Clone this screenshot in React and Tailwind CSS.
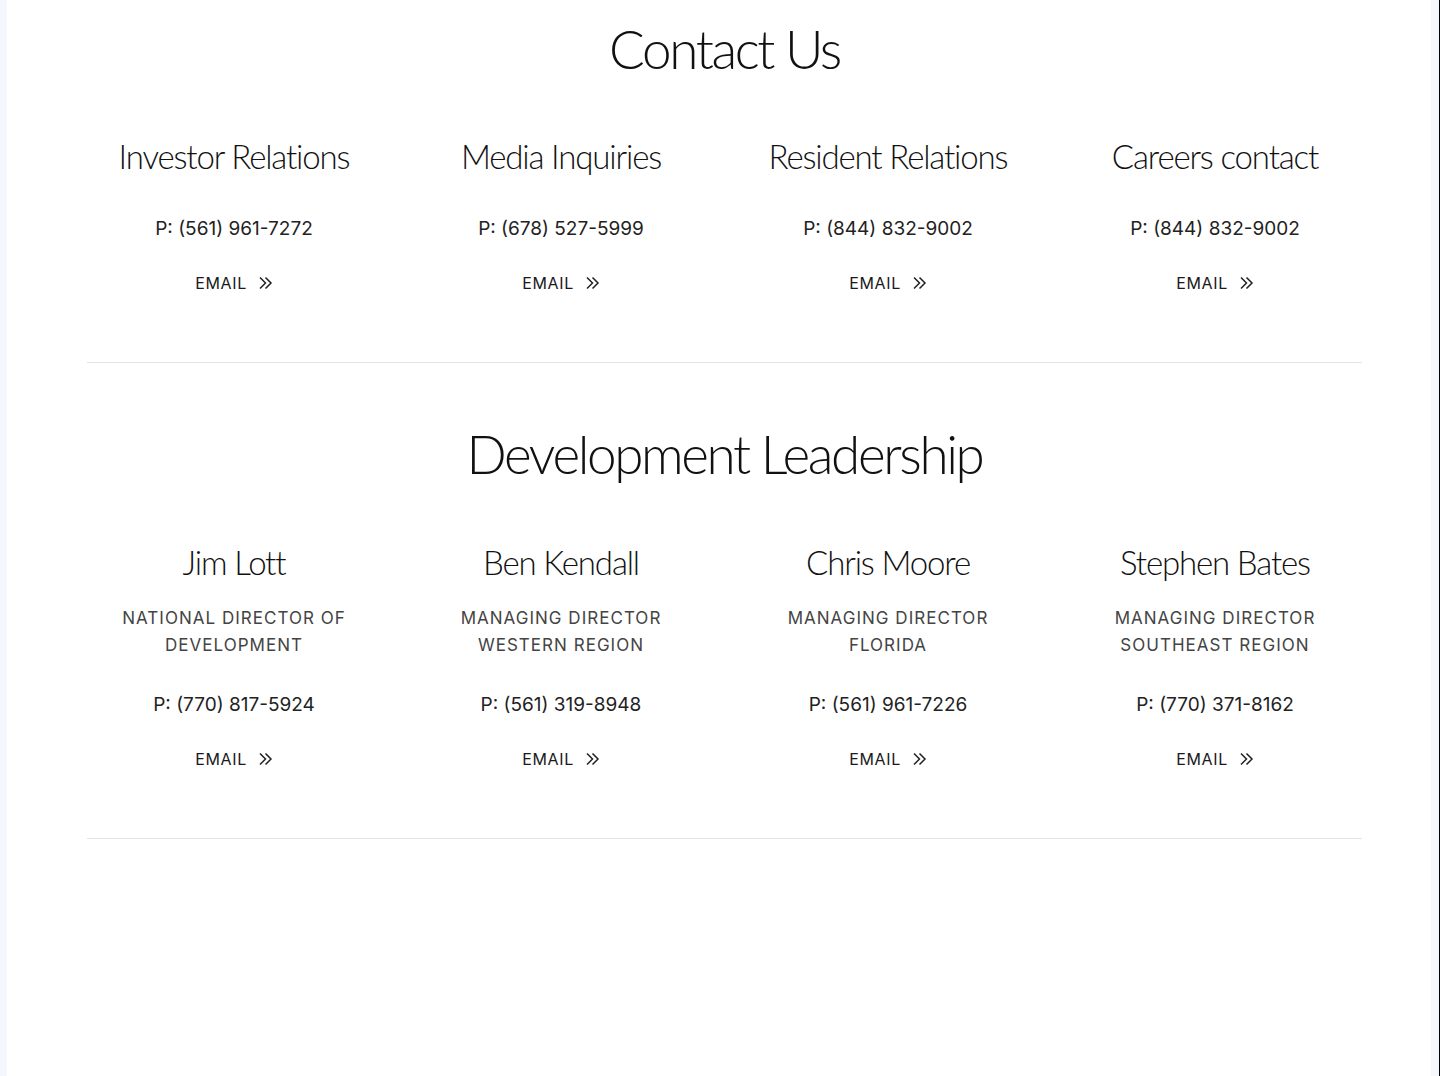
import React from "react";

const heading = { fontFamily: "Lato, 'Noto Sans', sans-serif" };
const body = { fontFamily: "Inter, 'Noto Sans', sans-serif" };

function Chevrons() {
  return (
    <svg width="15" height="14" viewBox="0 0 15 14" fill="none" stroke="#222" strokeWidth="1.5">
      <path d="M2 1.5 L7.5 7 L2 12.5" />
      <path d="M7.5 1.5 L13 7 L7.5 12.5" />
    </svg>
  );
}

function Email() {
  return (
    <a className="flex items-center justify-center gap-[11px] text-[16px] tracking-[0.04em] text-[#1a1a1a]" style={body} href="#">
      <span>EMAIL</span>
      <Chevrons />
    </a>
  );
}

const contacts = [
  { t: "Investor Relations", p: "P: (561) 961-7272" },
  { t: "Media Inquiries", p: "P: (678) 527-5999" },
  { t: "Resident Relations", p: "P: (844) 832-9002" },
  { t: "Careers contact", p: "P: (844) 832-9002" },
];

const leaders = [
  { n: "Jim Lott", r: ["NATIONAL DIRECTOR OF", "DEVELOPMENT"], p: "P: (770) 817-5924" },
  { n: "Ben Kendall", r: ["MANAGING DIRECTOR", "WESTERN REGION"], p: "P: (561) 319-8948" },
  { n: "Chris Moore", r: ["MANAGING DIRECTOR", "FLORIDA"], p: "P: (561) 961-7226" },
  { n: "Stephen Bates", r: ["MANAGING DIRECTOR", "SOUTHEAST REGION"], p: "P: (770) 371-8162" },
];

export default function App() {
  return (
    <div className="flex min-h-[1076px] w-full bg-white">
      <div className="w-[7px] shrink-0 bg-[#f4f8fd]" />
      <main className="flex-1 bg-white">
        <div className="ml-[80px] w-[1275px]">
          <h1 className="pt-[13px] text-center text-[53px] font-light leading-[72px] tracking-[-0.045em] text-[#111]" style={heading}>
            Contact Us
          </h1>
          <div className="mt-[49px] grid grid-cols-4 gap-[33px]">
            {contacts.map((c) => (
              <div key={c.t} className="flex flex-col items-center text-center">
                <h2 className="text-[33px] font-light leading-[44px] tracking-[-0.035em] text-[#111]" style={heading}>{c.t}</h2>
                <p className="mt-[37px] text-[19px] leading-[28px] text-[#222]" style={body}>{c.p}</p>
                <div className="mt-[28px]"><Email /></div>
              </div>
            ))}
          </div>
          <div className="mt-[67px] h-px bg-[#e4e4e4]" />
          <h1 className="mt-[55px] text-center text-[53px] font-light leading-[72px] tracking-[-0.045em] text-[#111]" style={heading}>
            Development Leadership
          </h1>
          <div className="mt-[50px] grid grid-cols-4 gap-[33px]">
            {leaders.map((c) => (
              <div key={c.n} className="flex flex-col items-center text-center">
                <h2 className="text-[33px] font-light leading-[44px] tracking-[-0.035em] text-[#111]" style={heading}>{c.n}</h2>
                <p className="mt-[21px] text-[17px] leading-[27px] tracking-[0.06em] text-[#444]" style={body}>
                  {c.r[0]}<br />{c.r[1]}
                </p>
                <p className="mt-[32px] text-[19px] leading-[28px] text-[#222]" style={body}>{c.p}</p>
                <div className="mt-[28px]"><Email /></div>
              </div>
            ))}
          </div>
          <div className="mt-[67px] h-px bg-[#e4e4e4]" />
        </div>
      </main>
      <div className="w-[8px] shrink-0 bg-[#f4f8fd]" />
      <div className="w-px shrink-0 bg-black" />
    </div>
  );
}
